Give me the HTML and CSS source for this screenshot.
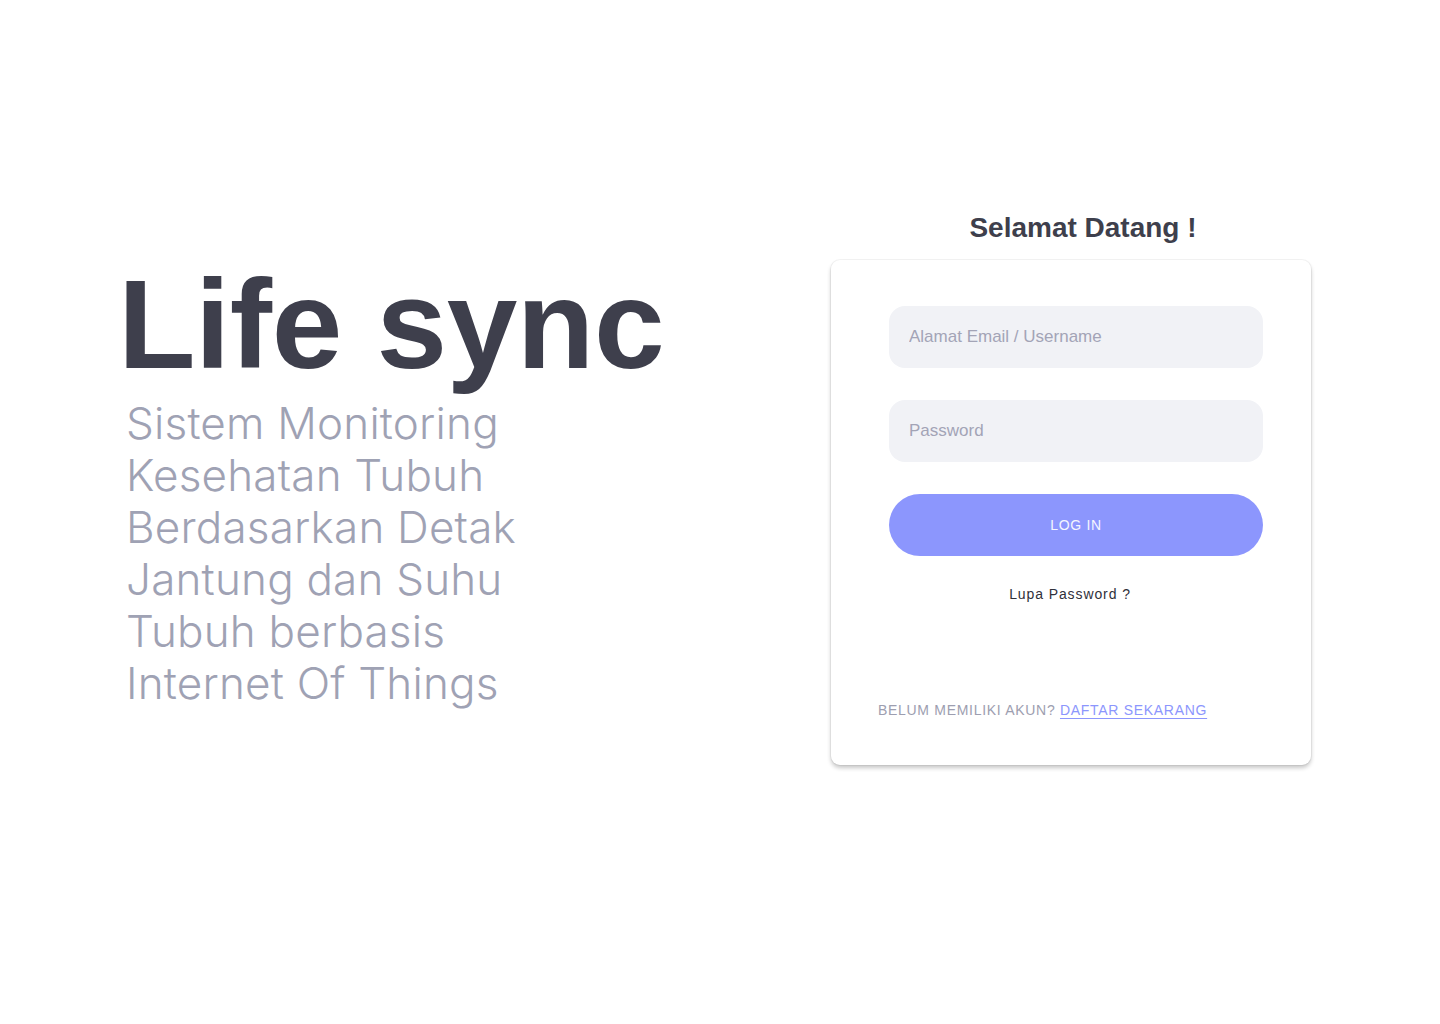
FILE: index.html
```html
<!DOCTYPE html>
<html lang="id">
<head>
<meta charset="utf-8">
<title>Life sync - Login</title>
<link rel="stylesheet" href="styles.css">
</head>
<body>
<main class="page">
  <section class="hero">
    <h1 class="hero-title">Life sync</h1>
    <p class="hero-subtitle">Sistem Monitoring<br>Kesehatan Tubuh<br>Berdasarkan Detak<br>Jantung dan Suhu<br>Tubuh berbasis<br>Internet Of Things</p>
  </section>
  <section class="auth">
    <h2 class="auth-heading">Selamat Datang !</h2>
    <form class="card">
      <input class="field" type="text" placeholder="Alamat Email / Username">
      <input class="field" type="password" placeholder="Password">
      <button class="btn" type="button">LOG IN</button>
      <a class="forgot" href="#">Lupa Password ?</a>
      <p class="signup">BELUM MEMILIKI AKUN? <a class="signup-link" href="#">DAFTAR SEKARANG</a></p>
    </form>
  </section>
</main>
</body>
</html>
```
FILE: styles.css
```css
* { box-sizing: border-box; }
html, body { margin: 0; padding: 0; background: #ffffff; }
body { font-family: "Liberation Sans", Arial, sans-serif; }

.page {
  display: flex;
  align-items: flex-start;
  padding: 211px 0 0 118px;
  min-height: 1024px;
}

.hero {
  flex: 0 0 713px;
  padding-top: 50px;
}
.hero-title {
  margin: 0;
  font-size: 127px;
  line-height: 127px;
  font-weight: 700;
  color: #3e3f4c;
  letter-spacing: -0.5px;
}
.hero-subtitle {
  margin: 9px 0 0 8px;
  font-family: "Inter", "Liberation Sans", sans-serif;
  font-weight: 300;
  font-size: 44px;
  line-height: 52px;
  color: #9fa2b4;
  letter-spacing: 0.2px;
}

.auth { flex: 0 0 480px; }
.auth-heading {
  margin: 0 0 15px;
  padding-left: 24px;
  text-align: center;
  font-size: 28px;
  line-height: 34px;
  font-weight: 700;
  color: #3e3f4c;
}

.card {
  display: flex;
  flex-direction: column;
  align-items: flex-start;
  margin: 0;
  padding: 46px 48px 45px 58px;
  background: #fff;
  border-radius: 9px;
  box-shadow: 0 3px 4px rgba(0, 0, 0, 0.22), 0 0 0 1px rgba(0, 0, 0, 0.045);
}

.field {
  width: 374px;
  height: 62px;
  margin: 0 0 32px;
  padding: 0 20px;
  border: 0;
  border-radius: 16px;
  background: #f1f2f6;
  font-family: "Liberation Sans", Arial, sans-serif;
  font-size: 17px;
  color: #3e3f4c;
  outline: none;
}
.field::placeholder { color: #a3a4b6; }

.btn {
  width: 374px;
  height: 62px;
  border: 0;
  border-radius: 31px;
  background: #8c96fd;
  color: #f4f5ff;
  font-family: "Liberation Sans", Arial, sans-serif;
  font-size: 14px;
  letter-spacing: 0.7px;
  cursor: pointer;
}

.forgot {
  align-self: stretch;
  margin: 28px 6px 0 -6px;
  text-align: center;
  font-size: 14px;
  line-height: 20px;
  letter-spacing: 0.9px;
  color: #2f303a;
  text-decoration: none;
}

.signup {
  margin: 96px 0 0 -11px;
  font-size: 14px;
  line-height: 20px;
  letter-spacing: 0.7px;
  color: #9d9eb0;
}
.signup-link {
  color: #8c96fd;
  text-decoration: underline;
  text-underline-offset: 3px;
  text-decoration-thickness: 1px;
}
```
